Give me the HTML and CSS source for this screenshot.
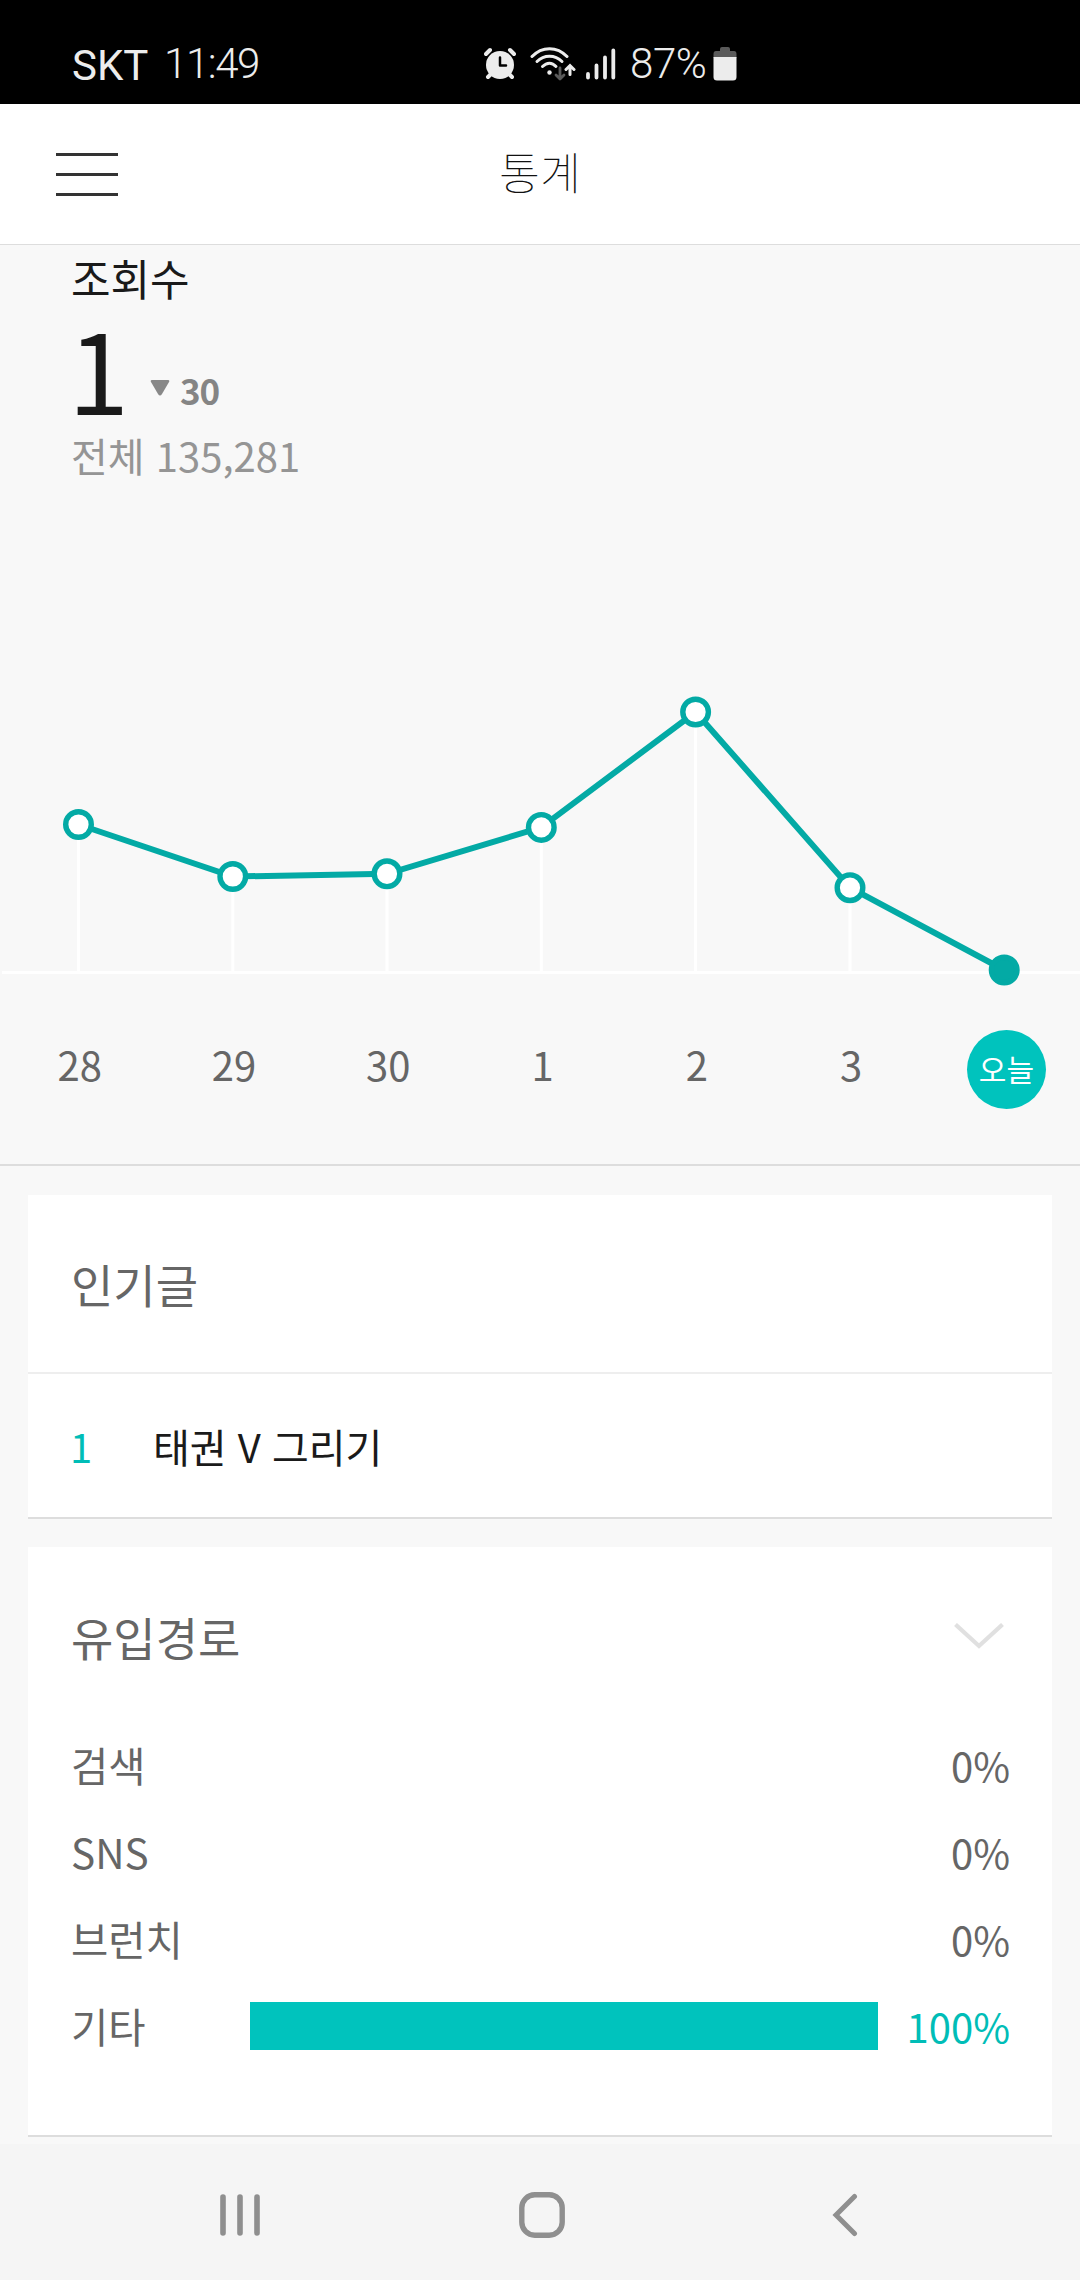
FILE: index.html
```html
<!DOCTYPE html>
<html lang="ko">
<head>
    <meta charset="UTF-8">
    <meta name="viewport" content="width=device-width, initial-scale=1.0">
    <title>통계</title>
    <link rel="stylesheet" href="styles.css">
</head>
<body>

<div class="status-bar">
    <span class="carrier">SKT</span>
    <span class="clock">11:49</span>
    <div class="status-icons">
        <svg class="alarm" width="32" height="33" viewBox="0 0 32 33">
            <g stroke="#ececec" stroke-width="4" stroke-linecap="round">
                <path d="M2 7l4-4M30 7l-4-4M4 30l4-4M28 30l-4-4"/>
            </g>
            <circle cx="16" cy="18" r="14" fill="#ececec"/>
            <path d="M16 10.500v8h6" fill="none" stroke="#000" stroke-width="2.500" stroke-linecap="round" stroke-linejoin="round"/>
        </svg>
        <svg class="wifi" width="46" height="34" viewBox="0 0 46 34">
            <g fill="none" stroke="#ececec" stroke-width="3" stroke-linecap="round">
                <path d="M2 9.500C12-1 27-1 37 9.500"/>
                <path d="M7 14.500C14 7.500 25 7.500 32 14.500"/>
                <path d="M12.500 19.500C17 15 22 15 26 19.500"/>
                <path d="M40 27.500V18.500M36 22.500l4-4 4 4"/>
            </g>
            <circle cx="19.500" cy="25.500" r="2.200" fill="#ececec"/>
            <path d="M30 21v10.500M26 28l4 4 4-4" fill="none" stroke="#5a5a5a" stroke-width="2.800" stroke-linecap="round" stroke-linejoin="round"/>
        </svg>
        <svg class="signal" width="30" height="34" viewBox="0 0 30 34">
            <path d="M2 27v3.500M10.500 18.500V30.500M19 10.500V30.500M27.300 3.500V30.500" stroke="#ececec" stroke-width="3.800" stroke-linecap="round"/>
        </svg>
        <span class="battery-text">87%</span>
        <svg class="battery" width="24" height="34" viewBox="0 0 24 34">
            <path d="M3 4h4V2q0-2 2-2h6q2 0 2 2v2h4q2.500 0 2.500 3v4H.5V7q0-3 2.500-3z" fill="#5a5a5a"/>
            <path d="M.5 10h23v20q0 3.500-3.500 3.500H4q-3.500 0-3.500-3.500z" fill="#ececec"/>
        </svg>
    </div>
</div>

<header class="header">
    <button class="menu-btn" aria-label="메뉴">
        <span></span>
        <span></span>
        <span></span>
    </button>
    <h1>통계</h1>
</header>

<section class="views">
    <div class="summary">
        <h2>조회수</h2>
        <div class="today-count">
            <strong>1</strong>
            <svg class="down" width="20" height="16" viewBox="0 0 20 16"><path d="M2 0h16q2 0 1 2l-7 12q-2 3-4 0L1 2q-1-2 1-2z" fill="#888"/></svg>
            <span class="diff">30</span>
        </div>
        <p class="total">전체 135,281</p>
    </div>

    <svg class="chart" width="1080" height="551" viewBox="0 479 1080 551">
        <!-- grid -->
        <path d="M2 972.500H1080M78.500 825V972M232.800 877V972M387 874V972M541.300 828V972M695.600 712V972M850 888V972" stroke="#fff" stroke-width="3"/>
        <polyline class="line" points="78.5,824.5 232.8,876.5 387,873.8 541.3,827.4 695.6,712 850,887.7 1004.2,970"/>
        <g class="dots">
            <circle cx="78.500" cy="824.500" r="12.800"/>
            <circle cx="232.800" cy="876.500" r="12.800"/>
            <circle cx="387" cy="873.800" r="12.800"/>
            <circle cx="541.300" cy="827.400" r="12.800"/>
            <circle cx="695.600" cy="712" r="12.800"/>
            <circle cx="850" cy="887.700" r="12.800"/>
            <circle class="now" cx="1004.200" cy="970" r="12.800"/>
        </g>
    </svg>

    <div class="days">
        <span>28</span>
        <span>29</span>
        <span>30</span>
        <span>1</span>
        <span>2</span>
        <span>3</span>
        <b class="today">오늘</b>
    </div>
</section>

<section class="card popular">
    <h3>인기글</h3>
    <div class="post">
        <span class="rank">1</span>
        <span>태권 V 그리기</span>
    </div>
</section>

<section class="card referrer">
    <div class="card-title">
        <h3>유입경로</h3>
        <svg width="50" height="26" viewBox="0 0 50 26"><path d="M1.500 1.500L25 23 48.500 1.500" fill="none" stroke="#e0e0e0" stroke-width="4.200"/></svg>
    </div>
    <div class="row">
        <span class="name">검색</span>
        <div class="track"></div>
        <span class="percent">0%</span>
    </div>
    <div class="row">
        <span class="name">SNS</span>
        <div class="track"></div>
        <span class="percent">0%</span>
    </div>
    <div class="row">
        <span class="name">브런치</span>
        <div class="track"></div>
        <span class="percent">0%</span>
    </div>
    <div class="row active">
        <span class="name">기타</span>
        <div class="track"><div class="bar" style="width: 100%"></div></div>
        <span class="percent">100%</span>
    </div>
</section>

<nav class="nav-bar">
    <svg class="recent" width="42" height="46" viewBox="0 0 42 46"><path d="M4 5v36M21 5v36M38 5v36" stroke="#8f8f8f" stroke-width="5.600" stroke-linecap="round"/></svg>
    <svg class="home" width="46" height="46" viewBox="0 0 46 46"><rect x="2.800" y="2.800" width="40.400" height="40.400" rx="13" fill="none" stroke="#8f8f8f" stroke-width="5.400"/></svg>
    <svg class="back" width="26" height="46" viewBox="0 0 26 46"><path d="M22.500 4.500L4 23l18.500 18.500" fill="none" stroke="#8f8f8f" stroke-width="5" stroke-linecap="round"/></svg>
</nav>

</body>
</html>
```
FILE: styles.css
```css
* {
    box-sizing: border-box;
}

body {
    margin: 0;
    width: 1080px;
    height: 2280px;
    background-color: #f8f8f8;
    font-family: 'Noto Sans CJK KR', sans-serif;
    font-size: 40px;
    color: #666;
    display: flex;
    flex-direction: column;
    overflow: hidden;
}

h1, h2, h3, p {
    margin: 0;
    font-weight: normal;
}

svg {
    display: block;
    flex: none;
}

/* status bar */
.status-bar {
    height: 104px;
    padding: 24px 0 0 72px;
    background: #000;
    color: #ececec;
    font-family: Roboto, sans-serif;
    font-size: 42px;
    line-height: 80px;
    display: flex;
    align-items: flex-start;
}

.carrier {
    width: 92px;
    margin-top: 2px;
}

.clock {
    width: 320px;
    font-weight: 300;
    letter-spacing: -1.4px;
}

.status-icons {
    display: flex;
    height: 80px;
    padding-top: 23px;
}

.wifi {
    margin-left: 14px;
}

.signal {
    margin-left: 10px;
}

.battery-text {
    width: 82px;
    margin: -23px 0 0 14px;
    font-weight: 300;
    letter-spacing: -0.4px;
}

.battery {
    margin-left: 1px;
}

/* header */
.header {
    height: 141px;
    background: #fff;
    border-bottom: 1px solid #ddd;
    display: grid;
    grid-template-columns: 174px 1fr 174px;
    align-items: center;
}

.menu-btn {
    width: 62px;
    height: 43px;
    margin: 0 0 0 56px;
    padding: 0;
    border: none;
    background: none;
    display: flex;
    flex-direction: column;
    justify-content: space-between;
}

.menu-btn span {
    width: 62px;
    height: 3px;
    background: #333;
}

.header h1 {
    padding-bottom: 6px;
    font-size: 44.5px;
    font-weight: 100;
    line-height: 60px;
    text-align: center;
    color: #111;
}

/* views + chart */
.views {
    height: 921px;
    border-bottom: 2px solid #ddd;
}

.summary {
    height: 234px;
    padding: 7px 0 0 71px;
}

.summary h2 {
    font-size: 43px;
    line-height: 50px;
    color: #1a1a1a;
}

.today-count {
    display: flex;
    margin-top: 10px;
    height: 110px;
}

.today-count strong {
    width: 82px;
    margin-left: -3px;
    font-size: 110px;
    font-weight: 400;
    line-height: 110px;
    color: #1a1a1a;
}

.down {
    margin-top: 68px;
}

.diff {
    margin: 53px 0 0 10px;
    font-size: 35px;
    font-weight: 700;
    line-height: 50px;
    letter-spacing: -1.2px;
    color: #858585;
}

.total {
    margin-top: 8px;
    line-height: 50px;
    color: #959595;
}

.line {
    fill: none;
    stroke: #03aaa5;
    stroke-width: 6;
}

.dots circle {
    fill: #fff;
    stroke: #03aaa5;
    stroke-width: 5.4;
}

.dots .now {
    fill: #03aaa5;
}

.days {
    display: grid;
    grid-template-columns: repeat(7, 154.3px);
    padding-left: 2.5px;
    text-align: center;
    line-height: 69px;
}

.today {
    width: 79px;
    height: 79px;
    margin-left: 38.7px;
    border-radius: 50%;
    background: #00c3bd;
    color: #fff;
    font-size: 30px;
    font-weight: 400;
    line-height: 77px;
}

/* cards */
.card {
    margin: 0 28px;
    background: #fff;
    border-bottom: 2px solid #ddd;
}

.card h3 {
    font-size: 46px;
    line-height: 60px;
}

.popular {
    height: 324px;
    margin-top: 29px;
}

.popular h3 {
    height: 179px;
    padding: 58px 43px 0;
    border-bottom: 2px solid #eee;
}

.post {
    display: flex;
    padding: 47px 42px 0;
    line-height: 50px;
    color: #1a1a1a;
}

.rank {
    width: 83px;
    color: #00bdb7;
}

.referrer {
    height: 590px;
    margin-top: 28px;
    padding: 59px 42px 0 43px;
}

.card-title {
    display: flex;
    justify-content: space-between;
    height: 115px;
    padding-right: 6px;
}

.card-title svg {
    margin-top: 17px;
}

.row {
    display: flex;
    align-items: center;
    height: 87px;
}

.name {
    width: 179px;
    font-size: 40.5px;
}

.track {
    width: 628px;
    height: 48px;
}

.bar {
    height: 48px;
    background: #00c3bd;
}

.percent {
    flex: 1;
    text-align: right;
}

.active .percent {
    color: #00bdb7;
}

/* bottom navigation */
.nav-bar {
    height: 136px;
    margin-top: auto;
    padding: 6px 0 0 219px;
    background: #f5f5f5;
    display: flex;
    align-items: center;
}

.home {
    margin-left: 258px;
}

.back {
    margin-left: 267px;
}
```
